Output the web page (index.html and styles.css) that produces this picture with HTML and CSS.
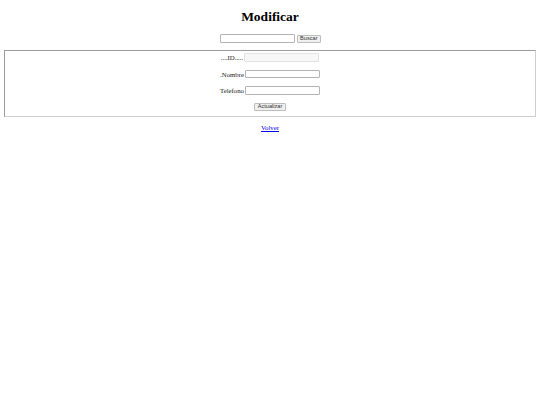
FILE: index.html
```html
<!DOCTYPE html>
<html>
<head>
<meta charset="utf-8">
<title>Modificar</title>
<link rel="stylesheet" href="styles.css">
</head>
<body>
<h1 class="title">Modificar</h1>
<form class="search">
<input type="text" class="field"> <button type="button" class="btn">Buscar</button>
</form>
<form class="edit">
<fieldset class="box">
<div class="row">....ID.....<input type="text" class="field" disabled></div>
<div class="row">.Nombre<input type="text" class="field"></div>
<div class="row">Telefono<input type="text" class="field"></div>
<div class="row"><button type="button" class="btn">Actualizar</button></div>
</fieldset>
</form>
<p class="back"><a href="#" class="link">Volver</a></p>
</body>
</html>
```

FILE: styles.css
```css
body {
  margin: 3.4px;
  font-family: "Liberation Serif", "Times New Roman", serif;
  font-size: 6.75px;
  color: #000;
  background: #fff;
}
.title {
  text-align: center;
  font-size: 13.5px;
  margin: 5.9px 0 8.9px;
}
.search {
  text-align: center;
  margin: 0;
}
.field {
  font-family: Arial, "Liberation Sans", sans-serif;
  font-size: 5.625px;
  width: 75px;
  height: 8.5px;
  padding: 0 1px;
  margin: 0 0 0 1px;
  border: 1px solid #b4b4b4;
  border-radius: 1px;
  box-sizing: border-box;
  vertical-align: middle;
  background: #fff;
}
.field:disabled {
  border-color: #e2e2e2;
  background: #f7f7f7;
}
.btn {
  font-family: Arial, "Liberation Sans", sans-serif;
  font-size: 5.625px;
  height: 8px;
  padding: 0 2.6px;
  border: 1px solid #bdbdbd;
  border-radius: 1px;
  background: #f0f0f0;
  color: #333;
  vertical-align: middle;
  line-height: 1;
}
.edit {
  margin: 6.75px 0 0;
}
.box {
  margin: 0 0.85px;
  padding: 2.6px 5px 4.4px;
  border-style: solid;
  border-width: 1px;
  border-color: #9c9c9c #cfcfcf #cfcfcf #9c9c9c;
  display: flex;
  flex-direction: column;
  gap: 7.4px;
}
.row {
  height: 9px;
  display: flex;
  align-items: center;
  justify-content: center;
  color: #222;
}
.back {
  text-align: center;
  margin: 6.75px 0;
}
.link {
  color: #0000ee;
}
```
